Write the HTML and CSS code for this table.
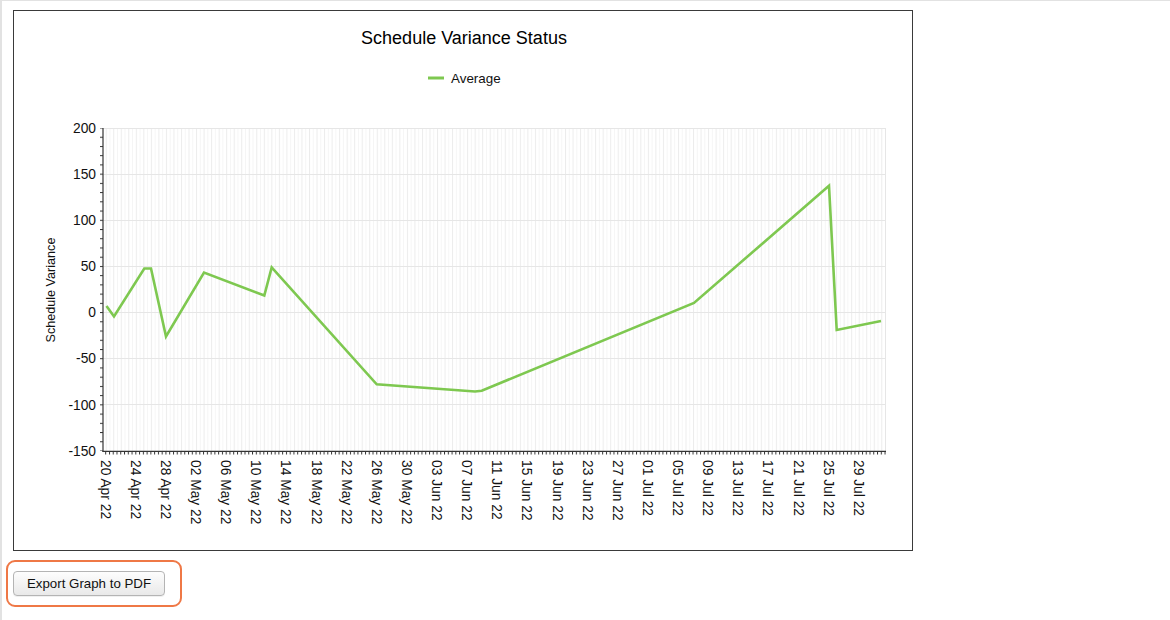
FILE: index.html
```html
<!DOCTYPE html>
<html>
<head>
<meta charset="utf-8">
<title>Schedule Variance Status</title>
<link rel="stylesheet" href="styles.css">
</head>
<body>
<div class="page">
  <div class="chart-box">
    <svg class="chart" width="898" height="538" viewBox="14 11 898 538" xmlns="http://www.w3.org/2000/svg">
      <defs>
        <pattern id="vgrid" patternUnits="userSpaceOnUse" x="105.7" y="0" width="7.53" height="600">
          <rect x="0" y="0" width="1" height="600" fill="#ececec"/>
          <rect x="3.765" y="0" width="1" height="600" fill="#f5f5f5"/>
        </pattern>
        <pattern id="xticks" patternUnits="userSpaceOnUse" x="105.2" y="0" width="3.765" height="600">
          <rect x="0" y="0" width="1" height="600" fill="#333"/>
        </pattern>
        <pattern id="yticks" patternUnits="userSpaceOnUse" x="0" y="127.5" width="10" height="9.229">
          <rect x="0" y="0" width="10" height="1" fill="#333"/>
        </pattern>
      </defs>

      <text class="title" x="464" y="44" text-anchor="middle">Schedule Variance Status</text>

      <line x1="428" y1="78" x2="444" y2="78" stroke="#7ec850" stroke-width="3"/>
      <text class="legend" x="451" y="82.5">Average</text>

      <!-- plot background grid -->
      <rect x="103" y="128" width="783" height="323" fill="url(#vgrid)"/>
      <g stroke="#e6e6e6" stroke-width="1">
        <line x1="103" y1="128.5" x2="886" y2="128.5"/>
        <line x1="103" y1="174.5" x2="886" y2="174.5"/>
        <line x1="103" y1="220.5" x2="886" y2="220.5"/>
        <line x1="103" y1="266.5" x2="886" y2="266.5"/>
        <line x1="103" y1="312.5" x2="886" y2="312.5"/>
        <line x1="103" y1="358.5" x2="886" y2="358.5"/>
        <line x1="103" y1="404.5" x2="886" y2="404.5"/>
        <line x1="885.5" y1="128" x2="885.5" y2="451"/>
      </g>

      <!-- axes -->
      <rect x="100" y="128" width="3" height="323" fill="url(#yticks)"/>
      <rect x="103" y="451" width="783" height="3.5" fill="url(#xticks)"/>
      <line x1="103" y1="128" x2="103" y2="452" stroke="#333" stroke-width="1.2"/>
      <line x1="102.5" y1="451.3" x2="886" y2="451.3" stroke="#333" stroke-width="1.2"/>

      <!-- y labels -->
      <g class="ylab" text-anchor="end">
        <text x="96" y="132.7">200</text>
        <text x="96" y="178.8">150</text>
        <text x="96" y="225">100</text>
        <text x="96" y="271.1">50</text>
        <text x="96" y="317.3">0</text>
        <text x="96" y="363.4">-50</text>
        <text x="96" y="409.6">-100</text>
        <text x="96" y="455.7">-150</text>
      </g>

      <text class="ytitle" transform="translate(55 290) rotate(-90)" text-anchor="middle">Schedule Variance</text>

      <!-- x labels -->
      <g class="xlab">
        <text transform="translate(100.7 460) rotate(90)">20 Apr 22</text>
        <text transform="translate(130.8 460) rotate(90)">24 Apr 22</text>
        <text transform="translate(160.9 460) rotate(90)">28 Apr 22</text>
        <text transform="translate(191.1 460) rotate(90)">02 May 22</text>
        <text transform="translate(221.2 460) rotate(90)">06 May 22</text>
        <text transform="translate(251.3 460) rotate(90)">10 May 22</text>
        <text transform="translate(281.4 460) rotate(90)">14 May 22</text>
        <text transform="translate(311.5 460) rotate(90)">18 May 22</text>
        <text transform="translate(341.7 460) rotate(90)">22 May 22</text>
        <text transform="translate(371.8 460) rotate(90)">26 May 22</text>
        <text transform="translate(401.9 460) rotate(90)">30 May 22</text>
        <text transform="translate(432.0 460) rotate(90)">03 Jun 22</text>
        <text transform="translate(462.1 460) rotate(90)">07 Jun 22</text>
        <text transform="translate(492.3 460) rotate(90)">11 Jun 22</text>
        <text transform="translate(522.4 460) rotate(90)">15 Jun 22</text>
        <text transform="translate(552.5 460) rotate(90)">19 Jun 22</text>
        <text transform="translate(582.6 460) rotate(90)">23 Jun 22</text>
        <text transform="translate(612.7 460) rotate(90)">27 Jun 22</text>
        <text transform="translate(642.9 460) rotate(90)">01 Jul 22</text>
        <text transform="translate(673.0 460) rotate(90)">05 Jul 22</text>
        <text transform="translate(703.1 460) rotate(90)">09 Jul 22</text>
        <text transform="translate(733.2 460) rotate(90)">13 Jul 22</text>
        <text transform="translate(763.3 460) rotate(90)">17 Jul 22</text>
        <text transform="translate(793.5 460) rotate(90)">21 Jul 22</text>
        <text transform="translate(823.6 460) rotate(90)">25 Jul 22</text>
        <text transform="translate(853.7 460) rotate(90)">29 Jul 22</text>
      </g>

      <!-- data -->
      <polyline class="series" points="106.5,306 114,316.5 144.3,268.5 151,268.5 166,336.5 204,272.5 264.3,295.5 271.7,267.3 376.7,384.3 475,391.5 481.7,390.7 694,303 829,185.7 836.7,330 881,321"/>
    </svg>
  </div>
  <div class="export-wrap">
    <button class="export-btn" type="button">Export Graph to PDF</button>
  </div>
</div>
</body>
</html>
```
FILE: styles.css
```css
html, body {
  margin: 0;
  padding: 0;
  background: #ffffff;
}

body {
  font-family: "Liberation Sans", Arial, sans-serif;
  color: #111;
}

.page {
  box-sizing: border-box;
  width: 1170px;
  height: 620px;
  border-top: 1px solid #e2e2e2;
  border-left: 2px solid #e2e2e2;
  padding-top: 9px;
  display: flex;
  flex-direction: column;
  align-items: flex-start;
}

.chart-box {
  margin-left: 11px;
  width: 898px;
  height: 539px;
  border: 1px solid #3a3a3a;
  background: #fff;
}

.chart {
  display: block;
  font-family: "Liberation Sans", Arial, sans-serif;
}

.title {
  font-size: 18px;
  fill: #000;
}

.legend {
  font-size: 13.4px;
  fill: #111;
}

.ylab text {
  font-size: 13.8px;
  fill: #111;
}

.ytitle {
  font-size: 12.6px;
  fill: #111;
}

.xlab text {
  font-size: 13.8px;
  fill: #111;
}

.series {
  fill: none;
  stroke: #7ec850;
  stroke-width: 2.6;
  stroke-linejoin: miter;
}

.export-wrap {
  box-sizing: border-box;
  margin-top: 9px;
  margin-left: 4px;
  width: 176px;
  height: 47px;
  padding: 9px 5px;
  border: 2px solid #ef7846;
  border-radius: 9px;
  display: flex;
  align-items: flex-start;
}

.export-btn {
  box-sizing: border-box;
  width: 152px;
  height: 25px;
  margin: 0;
  padding: 0 8px;
  font-family: "Liberation Sans", Arial, sans-serif;
  font-size: 13.3px;
  color: #111;
  background: linear-gradient(#fdfdfd, #e9e9e9);
  border: 1px solid #b4b4b4;
  border-radius: 4px;
  box-shadow: 0 1px 0 rgba(0, 0, 0, 0.06);
}
```
